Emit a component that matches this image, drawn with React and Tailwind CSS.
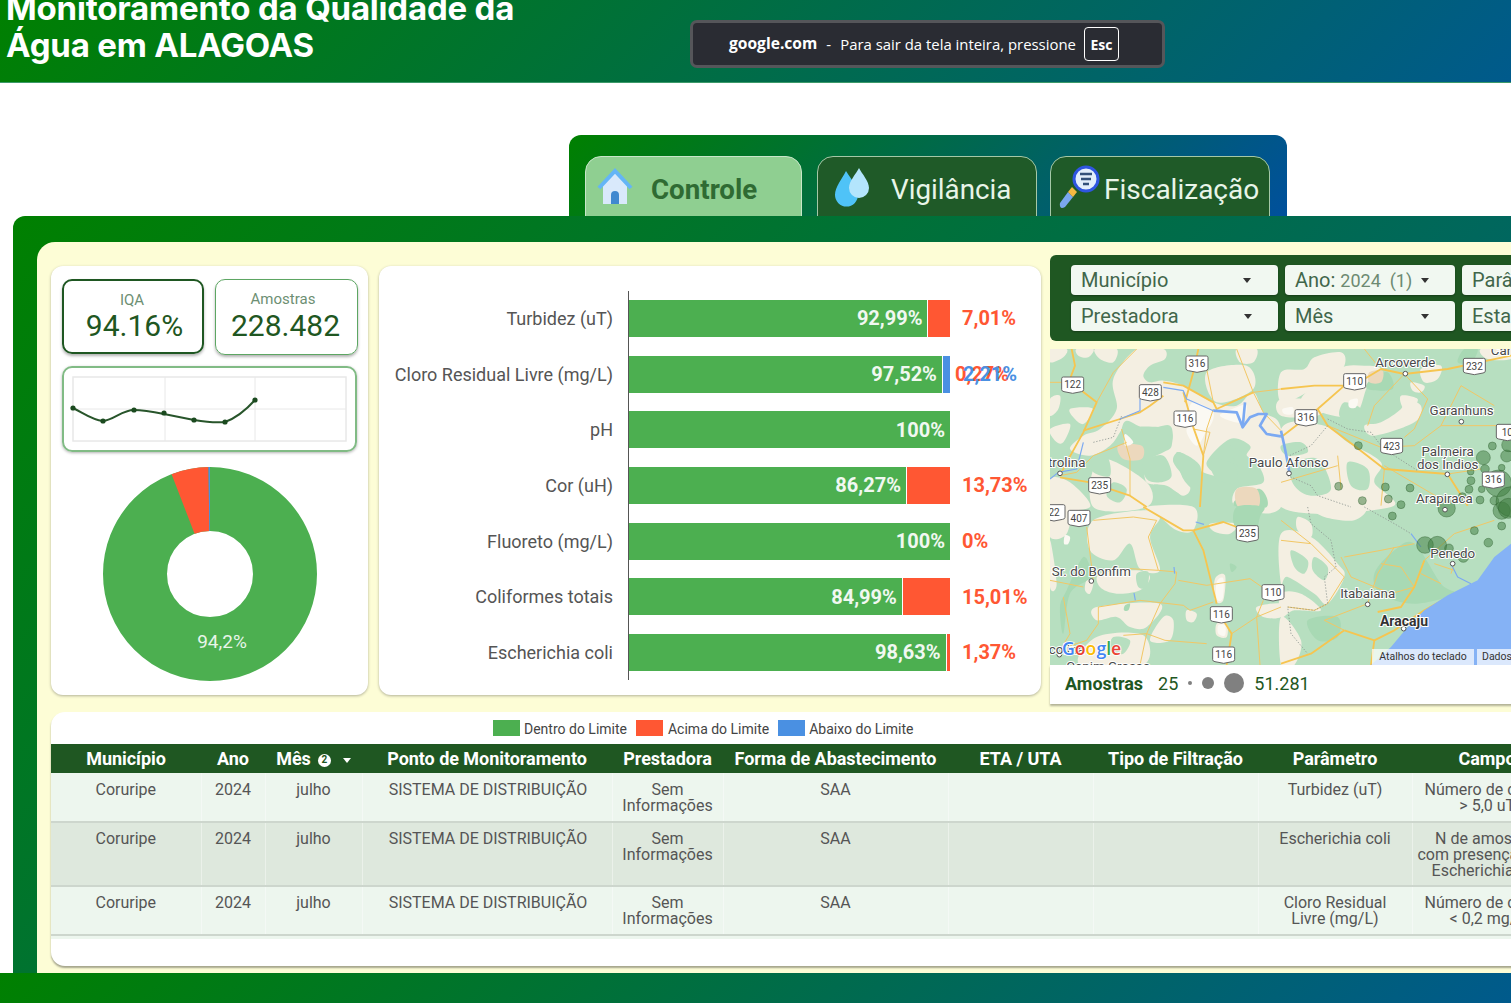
import React from 'react';
import { Fragment } from 'react';

const bars = [
  { label: 'Turbidez (uT)', green: 92.99, red: 7.01, text: '92,99%', redText: '7,01%' },
  { label: 'Cloro Residual Livre (mg/L)', green: 97.52, red: 0.27, blue: 2.21, text: '97,52%', redText: '0,27%', blueText: '2,21%' },
  { label: 'pH', green: 100, red: 0, text: '100%' },
  { label: 'Cor (uH)', green: 86.27, red: 13.73, text: '86,27%', redText: '13,73%' },
  { label: 'Fluoreto (mg/L)', green: 100, red: 0, text: '100%', redText: '0%' },
  { label: 'Coliformes totais', green: 84.99, red: 15.01, text: '84,99%', redText: '15,01%' },
  { label: 'Escherichia coli', green: 98.63, red: 1.37, text: '98,63%', redText: '1,37%' },
];

const headers = ['Município', 'Ano', 'Mês', 'Ponto de Monitoramento', 'Prestadora', 'Forma de Abastecimento', 'ETA / UTA', 'Tipo de Filtração', 'Parâmetro', 'Campo'];

const rows = [
  { param: 'Turbidez (uT)', campo: ['Número de casos', '> 5,0 uT'], height: 'h-[49px]', bg: 'bg-[#edf6ee]', pad: 'pt-[9px]' },
  { param: 'Escherichia coli', campo: ['N de amostras', 'com presença de E.', 'Escherichia coli'], height: 'h-[64px]', bg: 'bg-[#dee8dd]', pad: 'pt-[8px]' },
  { param: 'Cloro Residual Livre (mg/L)', campo: ['Número de casos', '< 0,2 mg/L'], height: 'h-[49px]', bg: 'bg-[#edf6ee]', pad: 'pt-[8px]' },
];

const spark = [[73, 408], [103, 421], [134, 410], [164, 413], [194, 420], [225, 422], [255, 400]];

// map traced per quadrant, 3 units = 1px
const quadrants = [
  {
    at: [0, 0],
    beige: [
      '0,0 50,0 40,25 0,40', '80,0 130,0 115,25 85,20', '135,0 200,0 190,40 150,30', '0,150 30,140 25,180 0,200',
      '60,180 110,175 130,185 100,225 70,205', '0,240 60,225 40,280 15,275',
      '190,90 260,0 340,0 345,30 300,50 280,80 300,100 340,95 400,110 490,160 560,170 610,130 640,190 693,240 693,474 560,474 560,420 640,400 620,340 590,320 600,290 540,270 470,340 500,380 440,360 390,310 370,340 420,410 400,440 350,410 290,400 290,340 340,310 365,290 360,230 290,240 230,215 210,250 180,290 120,320 60,300 100,260 150,240 200,180',
      '0,390 60,400 120,474 0,474', '150,330 290,400 290,474 130,474',
      '470,70 590,50 610,120 500,160', '560,0 620,0 610,40 570,40',
    ],
    green: [
      '280,340 340,320 365,380 330,400 290,390', '390,320 440,360 420,400 395,370', '540,290 610,340 570,360', '250,235 355,240 360,285 300,300 255,265',
      '380,310 450,350 440,420 400,390', '480,330 550,345 560,400 500,390', '190,400 230,420 210,460 170,440', '320,440 380,430 400,474 330,474',
      '120,330 170,320 180,380 130,370', '620,120 693,110 693,180 650,170',
    ],
    dark: ['560,450 630,420 650,474 560,474'],
    tan: ['560,420 620,420 625,474 565,474', '205,290 275,290 275,330 220,330'],
    white: ['410,240 470,210 470,240 440,290', '225,255 250,280 225,290', '430,160 490,190 470,240 420,200', '560,175 590,170 575,220 510,200'],
    thick: ['400,130 430,235 460,320 450,474', '405,160 430,70 445,0', '340,100 400,110 490,160 500,180 610,130', '65,0 75,50 60,90', '95,125 140,160 100,250 50,340 30,380', '30,385 120,400 240,440 290,474', '340,140 300,170 270,190 210,210 100,245'],
    thin: ['610,130 640,190 693,245', '610,130 693,120', '490,180 470,240 460,320', '215,240 240,330 240,440', '230,280 130,320 80,370 30,380', '490,160 470,60 440,20', '560,0 610,130', '190,70 140,160', '260,0 190,70', '0,100 40,100', '430,240 480,250 460,320'],
    dots: ['130,280 190,265 215,200'],
    water: ['0,390 25,370 80,360 100,280', '210,210 270,185 270,150', '340,115 400,125 410,150 490,185'],
    river: ['490,185 560,190 578,235 600,205 625,195 650,195 630,230 650,255 693,262', '585,160 578,235'],
  },
  {
    at: [693, 0],
    beige: [
      '0,70 70,60 100,25 180,10 190,50 140,100 80,130 0,160', '170,60 250,50 300,60 260,110 220,200 120,190 60,150',
      '280,260 400,220 420,170 370,150 360,180 300,220 250,230', '0,240 130,230 200,280 300,340 280,400 330,474 0,474',
      '600,0 690,0 690,30 620,30', '420,60 480,50 470,90 430,100', '0,150 130,160 110,200 0,200',
      '360,140 410,150 390,180 365,175', '390,100 430,110 420,130 395,125',
    ],
    green: ['30,350 110,330 150,420 90,440 40,410', '0,290 60,280 80,310 20,320', '200,340 260,360 260,420 210,410', '190,160 240,180 210,215 175,200'],
    dark: ['270,90 320,70 335,120 260,120', '550,0 590,0 570,40 530,40'],
    tan: ['265,70 305,65 300,100 265,100'],
    white: ['205,155 230,150 225,175 205,175', '5,180 35,175 35,195 10,195'],
    thick: ['0,120 100,110 190,110 110,180 0,265', '110,180 140,230 220,290 310,360 500,375 560,470', '250,90 300,60 370,75 500,60 690,20'],
    thin: ['370,75 280,170 260,230', '370,75 440,150 400,240 370,265', '140,230 300,295 400,290 480,230 540,110 640,170', '480,230 690,230', '310,360 300,470', '170,320 180,420', '500,375 600,360', '250,0 290,50', '310,350 480,450', '0,400 170,350'],
    dots: ['140,210 200,240 270,250 300,290 340,320 410,365', '140,230 90,290 25,320', '20,380 90,410 110,440 210,474'],
    water: [],
    river: ['0,245 10,290 20,340 25,370'],
  },
  {
    at: [0, 474],
    beige: [
      '0,0 60,0 50,80 0,90', '130,40 280,10 330,30 300,90 330,190 270,185 240,110 190,160 120,130', '150,200 260,190 300,210 270,250 200,260 150,240',
      '140,300 330,290 290,360 240,360 200,330 140,340', '340,330 370,340 360,400 300,400', '285,0 430,0 430,70 380,70 330,30',
      '410,310 440,320 430,345 410,340', '495,215 525,205 520,280 495,280', '480,50 560,50 540,80 495,75', '0,100 20,230 0,240', '140,390 280,385 280,474 90,474',
      '500,350 530,350 530,390 500,385', '620,300 693,290 693,330 640,330', '110,220 130,225 120,260 105,250',
    ],
    green: ['260,200 295,195 290,240 265,240', '190,390 240,400 220,440 180,430'],
    dark: ['100,150 120,210 60,260 40,380 30,300 50,250', '560,0 640,0 630,30 610,90 555,60', '540,170 560,180 545,195', '225,295 240,290 235,310 222,310'],
    tan: [],
    white: ['45,85 60,90 55,110 42,110', '500,225 520,215 518,275 500,275', '505,355 525,355 525,385 505,380'],
    thick: ['280,0 400,70 430,70 520,45 560,60', '430,70 460,130 500,290', '520,340 545,380 530,474'],
    thin: ['130,40 250,30 320,40', '110,60 130,220', '320,40 295,90 325,190 380,195 375,230 330,290 290,380 270,474', '145,300 270,280 400,295 420,310 490,285', '385,220 470,235 600,215 650,250', '0,220 100,240', '40,270 60,380 30,430', '145,300 145,350 110,400 50,420', '220,385 290,380 345,400 470,410', '545,380 620,330 693,300', '640,280 620,330 630,474', '240,185 325,190'],
    dots: [],
    water: ['252,258 256,280', '372,180 374,200', '437,45 462,52'],
    river: [],
  },
  {
    at: [693, 474],
    beige: [
      '0,80 90,90 170,170 190,210 140,290 100,260 20,210 0,230', '50,30 90,50 90,90 50,70', '100,0 250,0 220,40 130,30', '0,260 60,260 120,310 40,310 0,330', '0,330 60,400 40,474 0,474',
    ],
    green: ['30,130 80,160 70,200 40,180', '100,150 140,180 130,220 95,190'],
    dark: ['280,200 340,130 400,110 480,230 520,260 400,290 300,260', '80,340 170,330 170,390 110,400'],
    tan: [],
    white: [],
    thick: ['430,160 400,240 360,300 290,315', '190,370 280,400 340,370 430,310 520,260', '0,470 90,440 190,370', '280,400 270,474'],
    thin: ['0,40 90,110 190,210 140,290 100,310 20,300', '0,100 90,110', '430,160 520,80 640,40', '190,150 300,130 400,110', '260,290 130,340 190,370', '340,120 290,200 260,290', '180,150 210,210 330,260', '420,200 480,230', '460,170 520,190', '520,170 510,200', '300,170 360,180 400,240', '330,260 400,240'],
    dots: ['80,0 90,50 150,100 165,180 130,210 140,290 100,310 20,300 30,380 80,440', '250,0 340,50 390,80'],
    water: ['390,80 420,120', '510,170 530,210 570,230'],
    river: [],
  },
];

// closed Catmull-Rom through the traced points, keeps the land patches soft
function smooth(points) {
  const p = points.split(' ').map((s) => s.split(',').map(Number));
  const n = p.length;
  let d = `M${p[0][0]} ${p[0][1]}`;
  for (let i = 0; i < n; i++) {
    const [a, b, c, e] = [p[(i - 1 + n) % n], p[i], p[(i + 1) % n], p[(i + 2) % n]];
    d += ` C${b[0] + (c[0] - a[0]) / 6} ${b[1] + (c[1] - a[1]) / 6} ${c[0] - (e[0] - b[0]) / 6} ${c[1] - (e[1] - b[1]) / 6} ${c[0]} ${c[1]}`;
  }
  return d + ' Z';
}

const shields = [
  [441, 45, '316'], [68, 108, '122'], [301, 131, '428'], [405, 210, '116'], [914, 98, '110'], [1273, 52, '232'], [768, 206, '316'], [1025, 292, '423'],
  [149, 410, '235'], [87, 508, '407'], [12, 491, '22'], [592, 554, '235'], [669, 731, '110'], [514, 797, '116'], [521, 918, '116'], [1372, 250, '10'], [1330, 393, '316'],
];

const circles = [
  [925, 290, 12], [866, 412, 12], [937, 455, 12], [1006, 414, 12], [1015, 450, 12], [1053, 467, 12], [1080, 417, 12], [1027, 501, 12], [1190, 478, 26],
  [1125, 588, 25], [1162, 590, 28], [1197, 598, 13], [1240, 624, 16], [1273, 545, 12], [1315, 581, 13], [1355, 531, 12], [1290, 453, 12], [1237, 443, 12],
  [1257, 421, 12], [1263, 395, 12], [1262, 368, 10], [1305, 360, 13], [1300, 326, 21], [1327, 291, 12], [1370, 321, 18], [1375, 288, 20], [1355, 356, 10],
  [1345, 403, 40], [1295, 421, 10], [1333, 455, 13], [1355, 485, 26], [1383, 458, 45], [1375, 478, 30],
];

const places = [
  [1066, 54, 'Arcoverde'], [1235, 198, 'Garanhuns'], [1193, 321, 'Palmeira'], [1193, 360, 'dos Índios'], [716, 353, 'Paulo Afonso'], [1183, 462, 'Arapiraca'],
  [1208, 628, 'Penedo'], [953, 746, 'Itabaiana'], [50, 353, 'trolina'], [124, 681, 'Sr. do Bonfim'], [1353, 18, 'Car'], [175, 966, 'Capim Grosso'], [50, 914, 'colina'],
];

const towns = [[1066, 74], [1234, 218], [1192, 376], [717, 373], [1185, 482], [1208, 644], [953, 766], [30, 373], [124, 696], [1061, 839], [28, 917]];

function MapPicture() {
  return (
    <svg viewBox="0 0 1383 948" className="block w-[461px] h-[316px] shrink-0 font-['Roboto',sans-serif]">
      <rect width="1383" height="948" fill="#b7dfc0" />
      {quadrants.map((q, i) => (
        <g key={i} transform={`translate(${q.at[0]} ${q.at[1]})`}>
          {q.beige.map((p) => <path key={p} d={smooth(p)} fill="#f4efe2" />)}
          {q.green.map((p) => <path key={p} d={smooth(p)} fill="#b7dfc0" />)}
          {q.dark.map((p) => <path key={p} d={smooth(p)} fill="#a8d9b4" />)}
          {q.tan.map((p) => <path key={p} d={smooth(p)} fill="#ecd8bd" />)}
          {q.white.map((p) => <path key={p} d={smooth(p)} fill="#fbf9f3" />)}
        </g>
      ))}
      {quadrants.map((q, i) => (
        <g key={i} transform={`translate(${q.at[0]} ${q.at[1]})`}>
          {q.thin.map((p) => <polyline key={p} points={p} fill="none" stroke="#f2c765" strokeWidth="3" strokeLinejoin="round" />)}
          {q.thick.map((p) => <polyline key={p} points={p} fill="none" stroke="#f6c550" strokeWidth="5.5" strokeLinejoin="round" />)}
          {q.dots.map((p) => <polyline key={p} points={p} fill="none" stroke="#8d9590" strokeWidth="2.5" strokeDasharray="4 5" />)}
          {q.water.map((p) => <polyline key={p} points={p} fill="none" stroke="#7ba9f2" strokeWidth="3.5" strokeLinejoin="round" />)}
          {q.river.map((p) => <polyline key={p} points={p} fill="none" stroke="#7ba9f2" strokeWidth="8" strokeLinejoin="round" />)}
        </g>
      ))}
      <polygon points="1383,584 1333,624 1283,694 1193,739 1123,784 1073,834 1023,894 963,948 1383,948" fill="#85b2f5" />
      {circles.map(([x, y, r]) => <circle key={`${x}-${y}`} cx={x} cy={y} r={r} fill="#3c7a3c" fillOpacity="0.5" stroke="#2e5e2e" strokeOpacity="0.6" strokeWidth="2" />)}
      {towns.map(([x, y]) => <circle key={`${x}t${y}`} cx={x} cy={y} r="7" fill="#fff" stroke="#555" strokeWidth="3" />)}
      {shields.map(([x, y, n]) => (
        <g key={`${x}s${y}`}>
          <path d={`M${x - 28} ${y - 24} H${x + 28} Q${x + 33} ${y - 24} ${x + 33} ${y - 19} V${y + 14} Q${x + 33} ${y + 19} ${x + 26} ${y + 20} L${x} ${y + 25} L${x - 26} ${y + 20} Q${x - 33} ${y + 19} ${x - 33} ${y + 14} V${y - 19} Q${x - 33} ${y - 24} ${x - 28} ${y - 24} Z`} fill="#fff" stroke="#666" strokeWidth="3" />
          <text x={x} y={y + 10} textAnchor="middle" fontSize="30" fill="#444">{n}</text>
        </g>
      ))}
      {places.map(([x, y, t]) => (
        <text key={t} x={x} y={y} textAnchor="middle" fontSize="40" fill="#4a4a4a" stroke="#fff" strokeWidth="6" paintOrder="stroke">{t}</text>
      ))}
      <text x="1062" y="831" textAnchor="middle" fontSize="42" fontWeight="700" fill="#333" stroke="#fff" strokeWidth="6" paintOrder="stroke">Aracaju</text>
      <text x="36" y="918" fontSize="53" fontFamily="'Open Sans',sans-serif" fontWeight="600" stroke="#fff" strokeWidth="5" paintOrder="stroke">
        <tspan fill="#4285f4">G</tspan><tspan fill="#ea4335">o</tspan><tspan fill="#fbbc05">o</tspan><tspan fill="#4285f4">g</tspan><tspan fill="#34a853">l</tspan><tspan fill="#ea4335">e</tspan>
      </text>
    </svg>
  );
}

function HouseIcon() {
  return (
    <svg viewBox="0 0 38 38" className="w-[38px] h-[38px] shrink-0">
      <path d="M7 17 L19 5 L31 17 V36 H7 Z" fill="#d9e9fb" />
      <path d="M3 20 L19 3 L35 20" fill="none" stroke="#64b5f6" strokeWidth="4" />
      <path d="M15 36 V27 a4 4 0 0 1 8 0 V36 Z" fill="#3f88d0" />
    </svg>
  );
}

function DropsIcon() {
  return (
    <svg viewBox="0 0 38 40" className="w-[38px] h-[40px] shrink-0">
      <path d="M12 4 C17 12 24 20 24 28 A11.5 11.5 0 0 1 1 28 C1 20 8 12 12 4 Z" fill="#4fc3f7" />
      <path d="M25 1 C28 7 35 14 35 21 A10 10 0 0 1 15 21 C15 14 22 7 25 1 Z" fill="#b3e5fc" />
    </svg>
  );
}

function SearchIcon() {
  return (
    <svg viewBox="0 0 44 44" className="w-[44px] h-[44px] shrink-0">
      <path d="M2 38 L10 27 L15 32 L7 42 Q1 45 2 38 Z" fill="#7aa7ef" />
      <path d="M10 27 L14 22 L19 27 L15 32 Z" fill="#f5b942" />
      <circle cx="28" cy="14" r="12" fill="#e3eefb" stroke="#2f55e0" strokeWidth="3" />
      <path d="M22 9 H34 M23 14 H33 M25 19 H31" stroke="#33507a" strokeWidth="2.5" />
    </svg>
  );
}

function Caret() {
  return <span className="w-0 h-0 border-x-[4px] border-x-transparent border-t-[5px] border-t-[#333] shrink-0" />;
}

function FilterButton({ width, caretAt, children }) {
  return (
    <div className={`${width} h-[30px] shrink-0 bg-[#f1f8f1] rounded-[4px] shadow-[0_1px_2px_rgba(0,0,0,0.3)] flex items-center pl-[10px] text-[20px] text-[#41664a]`}>
      <span className="whitespace-nowrap">{children}</span>
      {caretAt && <span className={`${caretAt} flex`}><Caret /></span>}
    </div>
  );
}

function Donut() {
  // 94.2% green, then red, then a thin blue slice ending at the top
  const c = 2 * Math.PI * 75;
  return (
    <svg viewBox="0 0 214 214" className="w-[214px] h-[214px]">
      <g transform="rotate(-90 107 107)" fill="none" strokeWidth="64">
        <circle cx="107" cy="107" r="75" stroke="#4caf50" />
        <circle cx="107" cy="107" r="75" stroke="#ff5733" strokeDasharray={`${c * 0.056} ${c}`} strokeDashoffset={-c * 0.94} />
        <circle cx="107" cy="107" r="75" stroke="#4a90e2" strokeDasharray={`${c * 0.004} ${c}`} strokeDashoffset={-c * 0.996} />
      </g>
      <text x="119" y="181" textAnchor="middle" fontSize="19" fill="#e8f5e9">94,2%</text>
    </svg>
  );
}

export default function App() {
  return (
    <div className="w-[1511px] h-[1003px] overflow-hidden bg-white relative font-['Roboto',sans-serif]">
      <header className="h-[83px] overflow-hidden bg-[linear-gradient(135deg,#008000,#005a8c)] px-[6px] border-b border-[#3d9a6a]">
        <h1 className="-mt-[10px] w-[560px] text-[33px] leading-[37px] font-bold text-white font-['Inter',sans-serif] tracking-[-0.2px]">
          Monitoramento da Qualidade da Água em ALAGOAS
        </h1>
      </header>

      <div className="absolute left-[690px] top-[20px] w-[475px] h-[48px] bg-[#2a2c33] border-[3px] border-[#55565a] rounded-[7px] flex items-center pl-[36px] text-[15px] text-white font-['Open_Sans',sans-serif] whitespace-nowrap">
        <b className="font-bold text-[15.6px]">google.com</b>
        <span className="mx-[9px]">-</span>
        <span className="text-[14.9px]">Para sair da tela inteira, pressione</span>
        <span className="ml-[8px] w-[35px] h-[34px] border border-white rounded-[4px] flex items-center justify-center font-bold text-[14px]">Esc</span>
      </div>

      <div className="mt-[52px] ml-[569px] w-[718px] h-[81px] rounded-t-[12px] bg-[linear-gradient(135deg,#008000,#00509c)] pt-[21px] pl-[16px] flex items-start overflow-hidden">
        <div className="w-[217px] h-[62px] rounded-t-[16px] border border-[#c8e6c9] bg-[#8fcf91] flex items-center pl-[10px]">
          <HouseIcon />
          <span className="ml-[17px] mt-[6px] text-[27.7px] font-bold text-[#2f6b33]">Controle</span>
        </div>
        <div className="ml-[15px] w-[220px] h-[62px] rounded-t-[16px] border border-[#a5c8a7] bg-[#1f5a28] flex items-center pl-[16px]">
          <DropsIcon />
          <span className="ml-[19px] mt-[6px] text-[27.8px] text-[#e8f5e9]">Vigilância</span>
        </div>
        <div className="ml-[13px] w-[220px] h-[62px] rounded-t-[16px] border border-[#a5c8a7] bg-[#1f5a28] flex items-center pl-[7px]">
          <SearchIcon />
          <span className="ml-[2px] mt-[6px] text-[28px] text-[#e8f5e9] whitespace-nowrap">Fiscalização</span>
        </div>
      </div>

      <div className="ml-[13px] h-[757px] rounded-tl-[12px] bg-[linear-gradient(135deg,#008000,#005a8c)] pt-[26px] pl-[24px]">
        <main className="h-[731px] rounded-tl-[18px] bg-[#fdfdd6] pt-[13px] pl-[14px] overflow-hidden">
          <div className="flex items-start w-[1600px]">
            <section className="mt-[11px] w-[317px] h-[429px] shrink-0 bg-white rounded-[12px] shadow-[0_1px_3px_rgba(0,0,0,0.3)] pt-[13px] pl-[11px]">
              <div className="flex">
                <div className="w-[142px] h-[75px] border-2 border-[#1f5722] rounded-[10px] shadow-[0_2px_3px_rgba(0,0,0,0.3)] flex flex-col items-center pt-[11px] text-[#1f5722]">
                  <span className="text-[15px] leading-[16px] text-[#6d8f73] -ml-[2px]">IQA</span>
                  <span className="ml-[3px] mt-[1px] text-[30px] leading-[34px]">94.16%</span>
                </div>
                <div className="ml-[11px] w-[143px] h-[76px] border border-[#5da663] rounded-[10px] shadow-[0_2px_3px_rgba(0,0,0,0.3)] flex flex-col items-center pt-[3px] text-[#1f5722]">
                  <span className="mt-[8px] text-[15px] leading-[16px] text-[#6d8f73] -ml-[7px]">Amostras</span>
                  <span className="mt-[2px] text-[30px] leading-[34px] -ml-[2px]">228.482</span>
                </div>
              </div>
              <div className="mt-[11px] w-[295px] h-[86px] border-2 border-[#81bb85] rounded-[10px] shadow-[0_1px_3px_rgba(0,0,0,0.3)]">
                <svg viewBox="64 368 291 82" className="block w-[291px] h-[82px]">
                  <rect x="73" y="377" width="273" height="64" fill="none" stroke="#e8e8e8" strokeWidth="1.5" />
                  <path d="M165 377 V441 M255 377 V441 M73 409 H346" stroke="#e8e8e8" strokeWidth="1" />
                  <path d="M73 408 C85 414 92 420 103 421 C114 420 122 410 134 410 C144 410 154 412 164 414 C174 416 184 418 194 420 C206 422 216 423 225 422 C236 418 246 410 255 400" fill="none" stroke="#28552b" strokeWidth="2" />
                  {spark.map(([x, y]) => <circle key={x} cx={x} cy={y} r="2.6" fill="#1b4a1f" />)}
                </svg>
              </div>
              <div className="mt-[15px] ml-[41px] w-[214px]">
                <Donut />
              </div>
            </section>

            <section className="mt-[11px] ml-[11px] w-[662px] h-[429px] shrink-0 bg-white rounded-[12px] shadow-[0_1px_3px_rgba(0,0,0,0.3)] pt-[24.5px]">
              {bars.map((b) => (
                <div key={b.label} className="h-[55.7px] flex items-stretch">
                  <div className="w-[234px] shrink-0 text-right text-[18px] text-[#555] flex items-center justify-end whitespace-nowrap">{b.label}</div>
                  <div className="ml-[15px] border-l border-[#555] flex items-center relative">
                    <div className="w-[321px] h-[37px] flex">
                      <div className="h-full bg-[#4caf50] flex items-center justify-end pr-[5px] text-[20px] font-bold text-[#f1f8f1]" style={{ width: `${b.green}%` }}>{b.text}</div>
                      {b.red > 0 && <div className="h-full bg-[#ff5733] border-l border-white" style={{ width: `${b.red}%` }} />}
                      {b.blue && <div className="h-full bg-[#4a90e2]" style={{ width: `${b.blue}%` }} />}
                    </div>
                    {b.redText && !b.blue && <span className="ml-[12px] text-[20px] font-bold text-[#ff5733]">{b.redText}</span>}
                    {b.blue && <span className="absolute left-[326px] text-[20px] font-bold text-[#ff5733]">{b.redText}</span>}
                    {b.blue && <span className="absolute left-[334px] text-[20px] font-bold text-[#4a90e2]">{b.blueText}</span>}
                  </div>
                </div>
              ))}
            </section>

            <section className="ml-[9px] w-[520px] shrink-0">
              <div className="h-[86px] bg-[#1f5722] rounded-[6px] pt-[10px] pl-[21px] flex flex-col gap-[6px]">
                <div className="flex gap-[7px]">
                  <FilterButton width="w-[207px]" caretAt="ml-[75px]">Município</FilterButton>
                  <FilterButton width="w-[170px]" caretAt="ml-[9px]">Ano: <span className="text-[18px] text-[#6d8a72]">2024 &nbsp;(1)</span></FilterButton>
                  <FilterButton width="w-[120px]">Parâmetro</FilterButton>
                </div>
                <div className="flex gap-[7px]">
                  <FilterButton width="w-[207px]" caretAt="ml-[65px]">Prestadora</FilterButton>
                  <FilterButton width="w-[170px]" caretAt="ml-[88px]">Mês</FilterButton>
                  <FilterButton width="w-[120px]">Estado</FilterButton>
                </div>
              </div>
              <div className="mt-[8px] h-[316px] relative overflow-hidden">
                <MapPicture />
                <div className="absolute left-[322px] top-[300px] h-[16px] w-[102px] bg-white/70 text-[10.5px] leading-[16px] text-center text-[#333] whitespace-nowrap">Atalhos do teclado</div>
                <div className="absolute left-[427px] top-[300px] h-[16px] w-[60px] bg-white/70 text-[10.5px] leading-[16px] pl-[5px] text-[#333]">Dados</div>
              </div>
              <div className="h-[39px] pb-[3px] bg-white shadow-[0_2px_2px_rgba(0,0,0,0.3)] flex items-center pl-[15px] text-[#1f5722] text-[18px]">
                <b className="font-bold">Amostras</b>
                <span className="ml-[15px]">25</span>
                <span className="ml-[10px] w-[4px] h-[4px] rounded-full bg-[#808080]" />
                <span className="ml-[10px] w-[12px] h-[12px] rounded-full bg-[#808080]" />
                <span className="ml-[10px] w-[20px] h-[20px] rounded-full bg-[#808080]" />
                <span className="ml-[10px]">51.281</span>
              </div>
            </section>
          </div>

          <section className="mt-[8px] w-[1600px] h-[254px] bg-white rounded-[14px] shadow-[0_2px_2px_rgba(0,0,0,0.35)] overflow-hidden">
            <div className="h-[32px] pl-[442px] flex items-center text-[14px] text-[#444] whitespace-nowrap">
              <span className="w-[27px] h-[16px] bg-[#4caf50]" />
              <span className="ml-[4px] mt-[2px]">Dentro do Limite</span>
              <span className="ml-[9px] w-[27px] h-[16px] bg-[#ff5733]" />
              <span className="ml-[5px] mt-[2px]">Acima do Limite</span>
              <span className="ml-[9px] w-[27px] h-[16px] bg-[#4a90e2]" />
              <span className="ml-[4px] mt-[2px]">Abaixo do Limite</span>
            </div>
            <table className="table-fixed w-[1511px] border-collapse text-center">
              <colgroup>
                <col className="w-[150px]" />
                <col className="w-[64px]" />
                <col className="w-[97px]" />
                <col className="w-[250px]" />
                <col className="w-[111px]" />
                <col className="w-[225px]" />
                <col className="w-[145px]" />
                <col className="w-[165px]" />
                <col className="w-[154px]" />
                <col className="w-[150px]" />
              </colgroup>
              <thead>
                <tr className="h-[29px] bg-[#1f5722] text-white text-[18px]">
                  {headers.map((h) => (
                    <th key={h} className="font-bold tracking-[-0.05px] whitespace-nowrap p-0">
                      {h}
                      {h === 'Mês' && (
                        <Fragment>
                          <span className="ml-[7px] inline-flex w-[13px] h-[13px] rounded-full bg-white text-[#1f5722] text-[10px] leading-none items-center justify-center align-middle">2</span>
                          <span className="ml-[12px] inline-block w-0 h-0 border-x-[4px] border-x-transparent border-t-[5px] border-t-white align-middle" />
                        </Fragment>
                      )}
                    </th>
                  ))}
                </tr>
              </thead>
              <tbody className="text-[16px] leading-[16px] text-[#555]">
                {rows.map((r) => (
                  <tr key={r.param} className={`${r.height} ${r.bg} border-b-2 border-[#cdd6cd]`}>
                    <td className={`align-top ${r.pad} border-r border-white/40`}>Coruripe</td>
                    <td className={`align-top ${r.pad} border-r border-white/40`}>2024</td>
                    <td className={`align-top ${r.pad} border-r border-white/40`}>julho</td>
                    <td className={`align-top ${r.pad} pl-[2px] border-r border-white/40 whitespace-nowrap`}>SISTEMA DE DISTRIBUIÇÃO</td>
                    <td className={`align-top ${r.pad} border-r border-white/40 px-[6px]`}>Sem Informações</td>
                    <td className={`align-top ${r.pad} border-r border-white/40`}>SAA</td>
                    <td className="border-r border-white/40" />
                    <td className="border-r border-white/40" />
                    <td className={`align-top ${r.pad} border-r border-white/40 px-[20px]`}>{r.param}</td>
                    <td className={`align-top ${r.pad} whitespace-nowrap`}>
                      {r.campo.map((line) => <div key={line}>{line}</div>)}
                    </td>
                  </tr>
                ))}
              </tbody>
            </table>
            <div className="h-[3px] bg-[#edf6ee]" />
          </section>
        </main>
      </div>

      <footer className="h-[30px] bg-[linear-gradient(135deg,#008000,#005a8c)]" />
    </div>
  );
}
